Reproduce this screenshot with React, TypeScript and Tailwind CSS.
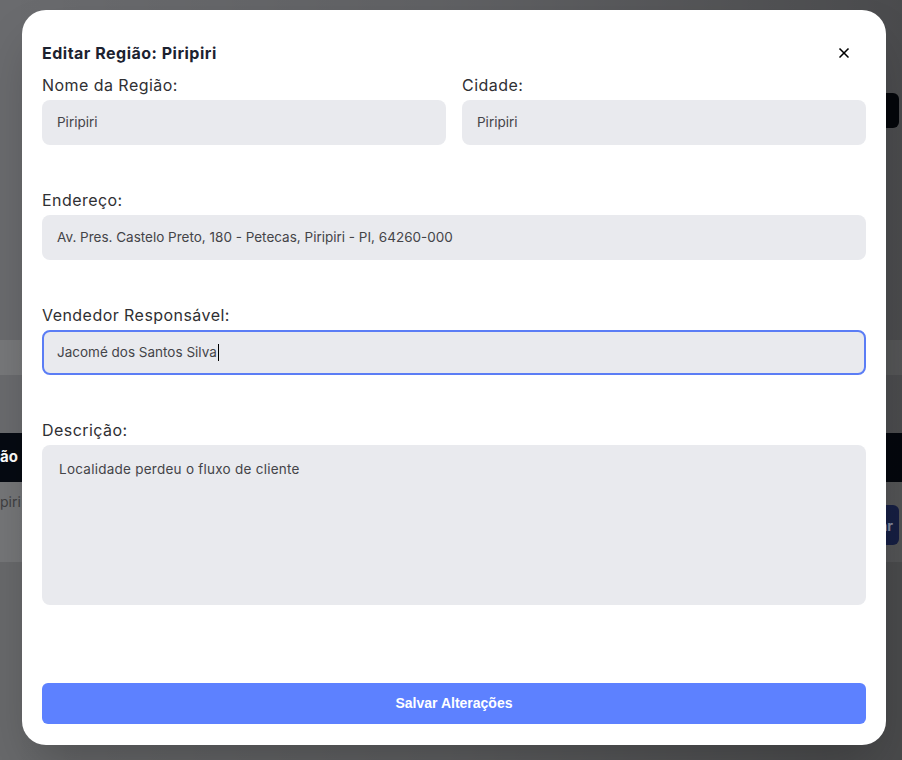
import React from "react";
import { X } from "lucide-react";

const font = { fontFamily: "Inter, 'Open Sans', sans-serif" };

function Field({ label, value, focused, className = "" }: { label: string; value: string; focused?: boolean; className?: string }) {
  return (
    <div className={"flex flex-col " + className}>
      <div className="text-[16px] leading-6 text-[#2f2f33] font-normal tracking-[0.45px]">{label}</div>
      <div
        className={
          "mt-[3px] h-[45px] rounded-lg bg-[#e9eaee] flex items-center text-[13.5px] text-[#444448] " +
          (focused ? "border-2 border-[#5b7df5] pl-[13px]" : "pl-[15px]")
        }
      >
        <span>{value}</span>
        {focused && <span className="ml-[1px] inline-block w-px h-[17px] bg-black" />}
      </div>
    </div>
  );
}

export default function App() {
  return (
    <div className="relative w-[902px] h-[760px] overflow-hidden bg-[#6a6b6e]" style={font}>
      {/* underlying dimmed page */}
      <div className="flex flex-col h-full">
        <div className="h-[340px] flex flex-col">
          <div className="mt-[93px] self-end mr-[3px] w-[120px] h-[35px] rounded-md bg-[#05080e]" />
        </div>
        <div className="h-[35px] bg-[#77787a]" />
        <div className="h-[58px]" />
        <div className="h-[49px] bg-[#060a12] flex items-center overflow-hidden">
          <span className="text-white font-bold text-[15px]">ão</span>
        </div>
        <div className="h-[80px] bg-[#757678] flex items-start justify-between overflow-hidden">
          <span className="mt-[9px] text-[#404042] text-[14px]">piri</span>
          <div className="mt-[23px] mr-[3px] w-[90px] h-[40px] rounded-md bg-[#1f2b5e] flex items-center justify-end pr-[6px] text-[#b8c0e0] font-bold text-[14px]">
            ar
          </div>
        </div>
        <div className="flex-1 bg-[#68696b]" />
      </div>
      {/* shading */}
      <div className="absolute inset-0 bg-gradient-to-r from-transparent via-black/10 to-black/30" />

      {/* modal */}
      <div className="absolute left-[22px] top-[10px] w-[864px] h-[735px] rounded-[24px] bg-white px-5 pt-[23px] pb-[21px] flex flex-col shadow-2xl">
        <div className="h-10 flex items-center justify-between">
          <div className="text-[16px] font-bold text-[#1c2230] tracking-[0.5px]">Editar Região: Piripiri</div>
          <button className="w-10 h-10 mr-[2px] flex items-center justify-center text-black">
            <X size={16} strokeWidth={2.5} />
          </button>
        </div>
        <div className="grid grid-cols-2 gap-4">
          <Field label="Nome da Região:" value="Piripiri" />
          <Field label="Cidade:" value="Piripiri" />
        </div>
        <Field className="mt-[43px]" label="Endereço:" value="Av. Pres. Castelo Preto, 180 - Petecas, Piripiri - PI, 64260-000" />
        <Field className="mt-[43px]" label="Vendedor Responsável:" value="Jacomé dos Santos Silva" focused />
        <div className="mt-[43px] flex flex-col">
          <div className="text-[16px] leading-6 text-[#2f2f33] tracking-[0.45px]">Descrição:</div>
          <div className="mt-[3px] h-[160px] rounded-lg bg-[#e9eaee] px-[17px] pt-[15px] text-[13.5px] leading-[18px] text-[#444448] tracking-[0.25px]">
            Localidade perdeu o fluxo de cliente
          </div>
        </div>
        <div className="flex-1" />
        <button
          className="h-[41px] rounded-md bg-[#5d81ff] text-white text-[14px] font-bold flex items-center justify-center"
          style={{ fontFamily: "'Liberation Sans', Arial, sans-serif" }}
        >
          Salvar Alterações
        </button>
      </div>
    </div>
  );
}
